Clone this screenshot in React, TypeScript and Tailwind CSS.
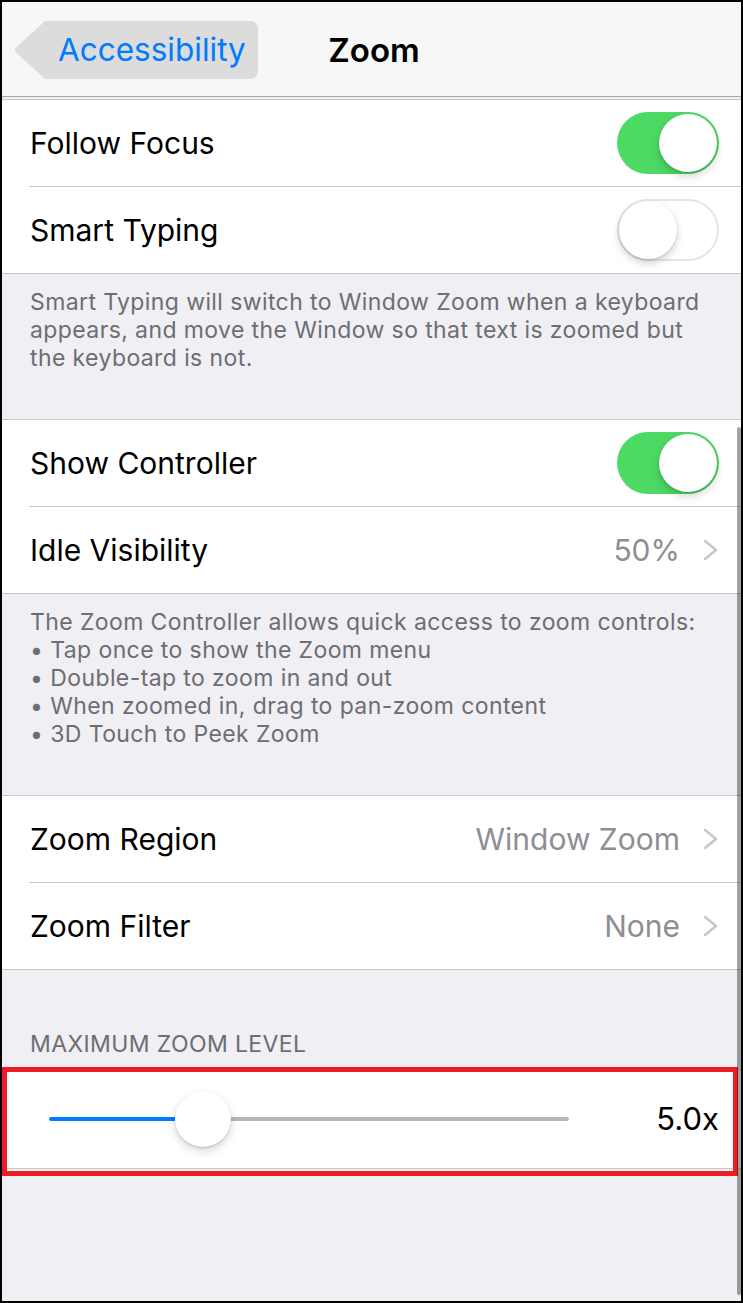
import type { ReactNode } from 'react';

const font = "font-[Inter,'Noto_Sans',sans-serif]";

function Toggle({ on }: { on: boolean }) {
    return (
        <div
            className={
                on
                    ? 'flex h-[62px] w-[102px] items-center justify-end rounded-full bg-[#4cd964] p-[2px]'
                    : 'flex h-[62px] w-[102px] items-center justify-start rounded-full border-2 border-[#e5e5ea] bg-white'
            }
        >
            <div className="h-[58px] w-[58px] rounded-full bg-white shadow-[0_4px_8px_rgba(0,0,0,0.18),0_1px_2px_rgba(0,0,0,0.12)]" />
        </div>
    );
}

function Chevron() {
    return (
        <svg width="17" height="22" viewBox="0 0 17 22" className="ml-[22px]">
            <path d="M3 2 L14 11 L3 20" fill="none" stroke="#c7c7cc" strokeWidth="2.6" strokeLinecap="round" strokeLinejoin="round" />
        </svg>
    );
}

function Row({ label, children }: { label: string; children?: ReactNode }) {
    return (
        <div className="flex h-[86px] items-center pl-[28px] pr-[22px]">
            <span className="text-[30px] text-black">{label}</span>
            <div className="ml-auto flex items-center">{children}</div>
        </div>
    );
}

function Detail({ value }: { value: string }) {
    return (
        <>
            <span className="text-[30px] text-[#8e8e93]">{value}</span>
            <Chevron />
        </>
    );
}

function Group({ children }: { children: ReactNode }) {
    return <div className="border-y border-[#c8c7cc] bg-white">{children}</div>;
}

function Sep() {
    return <div className="ml-[27px] h-px bg-[#c8c7cc]" />;
}

function Footer({ lines, className }: { lines: string[]; className: string }) {
    return (
        <div className={`pl-[28px] pt-[14px] text-[23px] leading-[28px] tracking-[0.4px] text-[#6d6d72] ${className}`}>
            {lines.map((l) => (
                <div key={l} className="whitespace-nowrap">
                    {l}
                </div>
            ))}
        </div>
    );
}

export default function App() {
    return (
        <div
            className={`relative flex h-[1303px] w-[743px] flex-col overflow-hidden border-b-2 border-l-2 border-r-2 border-t-2 border-black bg-[#efeff4] ${font}`}
        >
            {/* nav bar */}
            <div className="grid h-[95px] shrink-0 grid-cols-[1fr_auto_1fr] items-center border-b border-[#a7a7aa] bg-[#f7f7f7]">
                <div className="ml-[12px] mt-[2px] flex h-[58px] items-stretch">
                    <svg width="33" height="58" viewBox="0 0 33 58">
                        <path d="M34 0 H31 L2 26.5 Q0 29 2 31.5 L31 58 H34 Z" fill="#dcdcdc" />
                    </svg>
                    <div className="flex items-center rounded-r-[8px] bg-[#dcdcdc] pl-[11px] pr-[12px] text-[31.5px] text-[#007aff]">
                        Accessibility
                    </div>
                </div>
                <div className="mt-[3px] pl-[5px] text-[33px] font-semibold text-black">Zoom</div>
                <div />
            </div>

            <div className="mt-[2px]">
                <Group>
                    <Row label="Follow Focus">
                        <Toggle on />
                    </Row>
                    <Sep />
                    <Row label="Smart Typing">
                        <Toggle on={false} />
                    </Row>
                </Group>
                <Footer
                    className="h-[145px]"
                    lines={[
                        'Smart Typing will switch to Window Zoom when a keyboard',
                        'appears, and move the Window so that text is zoomed but',
                        'the keyboard is not.',
                    ]}
                />
                <Group>
                    <Row label="Show Controller">
                        <Toggle on />
                    </Row>
                    <Sep />
                    <Row label="Idle Visibility">
                        <Detail value="50%" />
                    </Row>
                </Group>
                <Footer
                    className="h-[201px]"
                    lines={[
                        'The Zoom Controller allows quick access to zoom controls:',
                        '• Tap once to show the Zoom menu',
                        '• Double-tap to zoom in and out',
                        '• When zoomed in, drag to pan-zoom content',
                        '• 3D Touch to Peek Zoom',
                    ]}
                />
                <Group>
                    <Row label="Zoom Region">
                        <Detail value="Window Zoom" />
                    </Row>
                    <Sep />
                    <Row label="Zoom Filter">
                        <Detail value="None" />
                    </Row>
                </Group>
                <div className="flex h-[99px] flex-col justify-end pb-[11px] pl-[28px] text-[23px] uppercase leading-[28px] tracking-[0.4px] text-[#6d6d72]">
                    Maximum Zoom Level
                </div>
                <div className="relative border-y border-[#c8c7cc] bg-white">
                    <div className="flex h-[98px] items-center pl-[47px] pr-[22px]">
                        <div className="relative flex h-[58px] w-[520px] items-center">
                            <div className="h-[4px] w-[150px] rounded-l-full bg-[#007aff]" />
                            <div className="h-[4px] flex-1 rounded-r-full bg-[#b7b7b7]" />
                            <div className="absolute left-[126px] top-px h-[56px] w-[56px] rounded-full bg-white shadow-[0_4px_10px_rgba(0,0,0,0.16),0_1px_2px_rgba(0,0,0,0.15)]" />
                        </div>
                        <span className="ml-auto text-[31px] text-black">5.0x</span>
                    </div>
                    <div className="pointer-events-none absolute -bottom-[8px] -top-[3px] left-0 right-[3px] border-[5px] border-[#ed1c24]" />
                </div>
            </div>

            {/* scroll indicator */}
            <div className="absolute right-0 top-[425px] h-[868px] w-[4px] rounded-full bg-[rgba(0,0,0,0.36)]" />
        </div>
    );
}
